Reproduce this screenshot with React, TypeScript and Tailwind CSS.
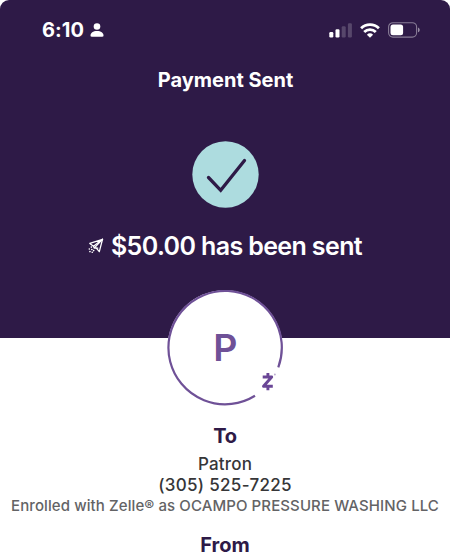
import React from 'react';

const recipient = {
  name: 'Patron',
  phone: '(305) 525-7225',
  enrolledAs: 'Enrolled with Zelle® as OCAMPO PRESSURE WASHING LLC',
};

function StatusBar() {
  return (
    <div className="flex h-[60px] items-center justify-between pl-[42px] pr-[30px]">
      <div className="flex items-center gap-[6px]">
        <span className="text-[20px] font-bold leading-6 tracking-[0.1px]">6:10</span>
        <svg width="14" height="14" viewBox="0 0 14 14" fill="currentColor">
          <circle cx="7" cy="3.500" r="3.300" />
          <path d="M0.500 12.600C0.500 9.800 3 8 7 8s6.500 1.800 6.500 4.600c0 0.800-0.400 1.200-1.200 1.200H1.700c-0.800 0-1.200-0.400-1.200-1.200z" />
        </svg>
      </div>

      <div className="flex items-center gap-[8px]">
        {/* Signal */}
        <svg width="23" height="15" viewBox="0 0 23 15" fill="currentColor">
          <rect x="0.300" y="9" width="4" height="5.500" rx="1.200" />
          <rect x="6.500" y="6.300" width="4" height="8.200" rx="1.200" />
          <rect x="12.700" y="3.300" width="4" height="11.200" rx="1.200" opacity="0.200" />
          <rect x="18.900" y="0.200" width="4" height="14.300" rx="1.200" opacity="0.200" />
        </svg>

        {/* Wifi */}
        <svg width="20" height="15" viewBox="0 0 20 15" fill="none" stroke="currentColor" strokeWidth="2.800">
          <path d="M1.100 5.200a12.800 12.800 0 0 1 17.800 0" />
          <path d="M4.200 8.900a8.300 8.300 0 0 1 11.600 0" />
          <path d="M10 14.800L6.900 11.700a4.500 4.500 0 0 1 6.200 0z" fill="currentColor" stroke="none" />
        </svg>

        {/* Battery */}
        <svg width="32" height="16" viewBox="0 0 32 16" fill="none">
          <rect x="0.600" y="0.700" width="28" height="14.400" rx="4.300" stroke="#fff" strokeOpacity="0.430" strokeWidth="1.100" />
          <rect x="2.500" y="2.600" width="12.600" height="10.600" rx="2.500" fill="#fff" />
          <path d="M30 5.500c1 0.400 1.700 1.300 1.700 2.400s-0.700 2-1.700 2.400z" fill="#fff" fillOpacity="0.500" />
        </svg>
      </div>
    </div>
  );
}

function SendIcon() {
  return (
    <svg width="16" height="16" viewBox="0 0 16 16" fill="none" stroke="currentColor" strokeWidth="1.300" strokeLinejoin="round" strokeLinecap="round">
      <path d="M14.500 1.300L1.800 5.400l3.700 2.900z" />
      <path d="M14.500 1.300L11.300 13.600 8.300 10.100" />
      <path d="M14.500 1.300L6.200 10.100h3.600M5.500 8.300l0.700 1.800" />
      <path d="M3.300 9.100h0.100M1.300 11h0.100M3.800 11.500h0.100M1.900 13.600h0.100M5.600 12.600h0.100M4.200 14.300h0.100" strokeWidth="1.600" />
    </svg>
  );
}

function Avatar({ initial }: { initial: string }) {
  return (
    <div className="relative -mt-[48px] flex h-[116px] w-[116px] items-center justify-center">
      <svg className="absolute inset-0" width="116" height="116" viewBox="0 0 116 116" fill="none">
        <circle cx="58" cy="57.700" r="57.500" fill="#fff" />
        <path d="M111.300 77.300A56.700 56.700 0 1 0 88 105.800" stroke="#6f5197" strokeWidth="2.200" />
        {/* Zelle mark */}
        <g stroke="#6a4696" strokeWidth="2.900">
          <path d="M95.700 87h9L96.500 96.300h9.300" strokeLinejoin="round" />
          <path d="M100.900 83v4M100.900 96v4.300" />
        </g>
        <circle cx="107.900" cy="84.500" r="0.900" fill="#b9a9cd" />
      </svg>
      <span className="relative text-[37.5px] font-semibold leading-[38px] tracking-[-0.500px] text-[#6f5197]">{initial}</span>
    </div>
  );
}

export default function App() {
  return (
    <div className="h-[552px] w-[450px] overflow-hidden bg-white font-['Inter','Liberation_Sans',sans-serif]">
      <header className="h-[338px] rounded-t-[9px] bg-[#2e1a47] text-white">
        <StatusBar />
        <h1 className="h-10 pl-px text-center text-[20px] font-bold leading-10">Payment Sent</h1>

        <div className="flex flex-col items-center pt-[41px]">
          <svg width="67" height="67" viewBox="0 0 67 67" fill="none">
            <circle cx="33.500" cy="33.500" r="33.200" fill="#addcdf" />
            <path d="M16.500 36.500L28.700 49.300 52.500 19.500" stroke="#2e1a47" strokeWidth="3.300" strokeLinecap="round" />
          </svg>
          <div className="mt-[22px] flex items-center gap-[7px]">
            <SendIcon />
            <p className="whitespace-nowrap text-[25px] font-semibold leading-8 tracking-[-0.620px]">$50.00 has been sent</p>
          </div>
        </div>
      </header>

      <main className="flex flex-col items-center whitespace-nowrap">
        <Avatar initial="P" />
        <h2 className="mt-[18px] text-[20px] font-bold leading-6 tracking-[-0.300px] text-[#2e1a47]">To</h2>
        <p className="mt-[6px] text-[17px] font-medium leading-5 tracking-[0.200px] text-[#363638]">{recipient.name}</p>
        <p className="mt-px text-[17px] font-medium leading-[21px] tracking-[0.300px] text-[#363638]">{recipient.phone}</p>
        <p className="text-[15px] font-medium leading-5 tracking-[0.100px] text-[#636365]">{recipient.enrolledAs}</p>
        <h2 className="mt-[17px] text-[20px] font-bold leading-6 text-[#2e1a47]">From</h2>
      </main>
    </div>
  );
}
